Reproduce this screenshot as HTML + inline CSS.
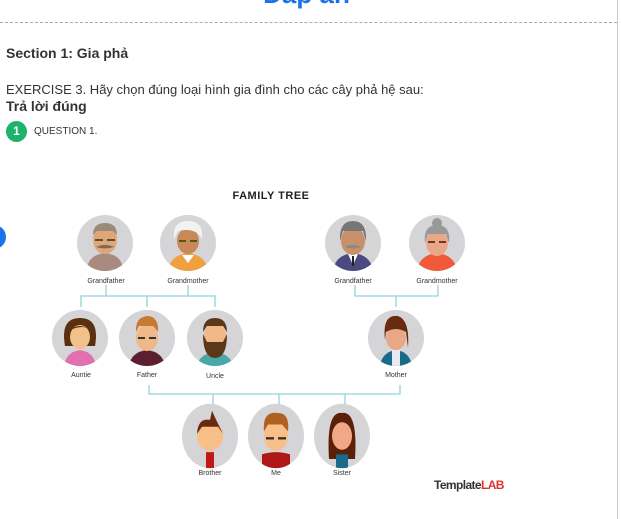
<!DOCTYPE html>
<html><head><meta charset="utf-8"><style>
body{margin:0;width:621px;height:519px;overflow:hidden;background:#fff;font-family:"Liberation Sans","Noto Sans CJK SC",sans-serif;position:relative}
.a{position:absolute;white-space:nowrap}
</style></head><body>
<div class="a" style="left:0;right:0;top:-21px;text-align:center;color:#1a73e8;font-weight:bold;font-size:26px;padding-right:8px">Đáp án</div>
<div class="a" style="left:0;top:22px;width:617px;border-top:1px dashed #aaa"></div>
<div class="a" style="left:617px;top:0;width:1px;height:519px;background:#ccc"></div>
<div class="a" style="left:6px;top:45px;font-size:14px;font-weight:bold;color:#333">Section 1: Gia phả</div>
<div class="a" style="left:6px;top:82px;font-size:13px;color:#333">EXERCISE 3. Hãy chọn đúng loại hình gia đình cho các cây phả hệ sau:</div>
<div class="a" style="left:6px;top:98px;font-size:14px;font-weight:bold;color:#333">Trả lời đúng</div>
<div class="a" style="left:6px;top:121px;width:21px;height:21px;border-radius:50%;background:#1db36b;color:#fff;font-weight:bold;font-size:12px;text-align:center;line-height:21px">1</div>
<div class="a" style="left:34px;top:126px;font-size:10px;color:#333">QUESTION 1.</div>
<div class="a" style="left:-18px;top:225px;width:24px;height:24px;border-radius:50%;background:#1a73e8"></div>
<svg class="a" style="left:0;top:0" width="621" height="519" font-family="Liberation Sans,sans-serif">
<text x="271" y="199" font-size="11" font-weight="bold" text-anchor="middle" fill="#222" letter-spacing="0.5">FAMILY TREE</text>
<g stroke="#8fd3dc" stroke-width="1.3" fill="none">
<path d="M81 307V296H215V307M106 285V296M188 285V296M147 296V307"/>
<path d="M355 285V296H438V285M396 296V307"/>
<path d="M149 385V394H400V385M213 394V405M279 394V405M345 394V405"/>
</g>
<defs>
<clipPath id="c1"><circle cx="0" cy="0" r="28"/></clipPath>
</defs>
<g transform="translate(105,243)"><circle r="28" fill="#d5d4d7"/><g clip-path="url(#c1)"><path d="M-18 28Q-18 12 0 10Q18 12 18 28Z" fill="#a88a80"/><ellipse cy="-3" rx="12" ry="14" fill="#e0a67a"/><path d="M-12-8Q-12-20 0-20Q12-20 12-8L8-12H-8Z" fill="#9a8a7a"/><path d="M-9 4Q0 0 9 4Q0 7-9 4Z" fill="#7a6a5a"/><path d="M-10-3h8M2-3h8" stroke="#552" stroke-width="2"/></g></g>
<g transform="translate(188,243)"><circle r="28" fill="#d5d4d7"/><g clip-path="url(#c1)"><path d="M-20 28Q-18 12 0 10Q18 12 20 28Z" fill="#f0a040"/><path d="M-6 12L0 20 6 12Z" fill="#fff"/><ellipse cy="-2" rx="11" ry="13" fill="#c88858"/><path d="M-14-4Q-16-22 0-22Q16-22 14-4Q8-16-10-12Z" fill="#f2f2f2"/><path d="M-9-2h7M2-2h7" stroke="#552" stroke-width="2"/></g></g>
<g transform="translate(353,243)"><circle r="28" fill="#d5d4d7"/><g clip-path="url(#c1)"><path d="M-20 28Q-18 12 0 10Q18 12 20 28Z" fill="#4a4a80"/><path d="M-5 11L0 22 5 11Z" fill="#fff"/><path d="M-1 13h2v10h-2z" fill="#222"/><ellipse cy="-2" rx="12" ry="14" fill="#c8906a"/><path d="M-13-2Q-14-22 0-22Q14-22 13-2L10-12H-10Z" fill="#777"/><path d="M-8 4Q0 0 8 4Q0 7-8 4Z" fill="#888"/></g></g>
<g transform="translate(437,243)"><circle r="28" fill="#d5d4d7"/><g clip-path="url(#c1)"><path d="M-20 28Q-18 12 0 10Q18 12 20 28Z" fill="#f05a3a"/><ellipse cy="0" rx="11" ry="13" fill="#e8a888"/><path d="M-12 0Q-14-18 0-18Q14-18 12 0L9-9H-9Z" fill="#999"/><circle cy="-20" r="5" fill="#999"/><path d="M-9-1h7M2-1h7" stroke="#733" stroke-width="2"/></g></g>
<g transform="translate(80,338)"><circle r="28" fill="#d5d4d7"/><g clip-path="url(#c1)"><path d="M-16 28Q-14 14 0 12Q14 14 16 28Z" fill="#e070b0"/><path d="M-15 8Q-20-20 0-20Q20-20 15 8Z" fill="#5a3010"/><ellipse cy="-1" rx="10" ry="12" fill="#f2c08a"/><path d="M-10-8Q0-16 10-8Q4-14-10-8Z" fill="#5a3010"/></g></g>
<g transform="translate(147,338)"><circle r="28" fill="#d5d4d7"/><g clip-path="url(#c1)"><path d="M-18 28Q-16 14 0 12Q16 14 18 28Z" fill="#5a2030"/><ellipse cy="0" rx="11" ry="13" fill="#f0b888"/><path d="M-11-6Q-12-22 2-22Q12-20 11-6L6-12H-8Z" fill="#c87a30"/><path d="M-9 0h7M2 0h7" stroke="#333" stroke-width="2"/></g></g>
<g transform="translate(215,338)"><circle r="28" fill="#d5d4d7"/><g clip-path="url(#c1)"><path d="M-18 28Q-16 16 0 14Q16 16 18 28Z" fill="#4aa8a8"/><ellipse cy="-2" rx="11" ry="13" fill="#f0b888"/><path d="M-12-4Q-12 20 0 20Q12 20 12-4L8 4H-8Z" fill="#5a3818"/><path d="M-12-6Q-12-20 0-20Q12-20 12-6L8-12H-8Z" fill="#5a3818"/></g></g>
<g transform="translate(396,338)"><circle r="28" fill="#d5d4d7"/><g clip-path="url(#c1)"><path d="M-16 28Q-14 14 0 12Q14 14 16 28Z" fill="#1a6a8a"/><path d="M-4 12h8v16h-8z" fill="#e8e8f0"/><ellipse cy="0" rx="10" ry="12" fill="#e8a888"/><path d="M-11 2Q-14-24 2-22Q14-18 12 10L10-6Q0-12-10-6Z" fill="#6a2a10"/></g></g>
<g transform="translate(210,436) scale(1,1.15)"><circle r="28" fill="#d5d4d7"/><g clip-path="url(#c1)"><path d="M-4 14h8v14h-8z" fill="#c01818"/><ellipse cy="0" rx="13" ry="13" fill="#f8c088"/><path d="M-13-2Q-12-16 0-14L2-22Q6-14 13-2L8-8H-8Z" fill="#6a2a10"/></g></g>
<g transform="translate(276,436) scale(1,1.15)"><circle r="28" fill="#d5d4d7"/><g clip-path="url(#c1)"><path d="M-14 28V16Q0 12 14 16V28Z" fill="#b01818"/><ellipse cy="0" rx="12" ry="13" fill="#f8c088"/><path d="M-12-4Q-14-22 2-20Q14-20 12-4L6-10H-8Z" fill="#b06020"/><path d="M-10 2h8M2 2h8" stroke="#333" stroke-width="2"/></g></g>
<g transform="translate(342,436) scale(1,1.15)"><circle r="28" fill="#d5d4d7"/><g clip-path="url(#c1)"><path d="M-13 20Q-16-22 0-20Q16-22 13 20Z" fill="#5a2008"/><path d="M-6 28V16H6V28Z" fill="#1a6a8a"/><ellipse cy="0" rx="10" ry="12" fill="#f0a888"/></g></g>
<g font-size="7" fill="#333" text-anchor="middle">
<text x="106" y="283">Grandfather</text><text x="188" y="283">Grandmother</text>
<text x="353" y="283">Grandfather</text><text x="437" y="283">Grandmother</text>
<text x="81" y="377">Auntie</text><text x="147" y="377">Father</text><text x="215" y="378">Uncle</text><text x="396" y="377">Mother</text>
<text x="210" y="475">Brother</text><text x="276" y="475">Me</text><text x="342" y="475">Sister</text>
</g>
<text x="434" y="489" font-size="12" font-weight="bold" fill="#333" letter-spacing="-0.6">Template<tspan fill="#e03030">LAB</tspan></text>
</svg>
</body></html>
